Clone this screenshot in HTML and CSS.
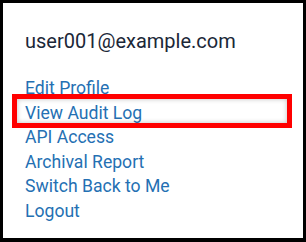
FILE: index.html
```html
<!DOCTYPE html>
<html>
<head>
<meta charset="utf-8">
<link rel="stylesheet" href="styles.css">
</head>
<body>
<div class="frame">
  <div class="email">user001@example.com</div>
  <ul class="menu">
    <li><a href="#">Edit Profile</a></li>
    <li><a href="#">View Audit Log</a></li>
    <li><a href="#">API Access</a></li>
    <li><a href="#">Archival Report</a></li>
    <li><a href="#">Switch Back to Me</a></li>
    <li><a href="#">Logout</a></li>
  </ul>
  <div class="highlight"></div>
</div>
</body>
</html>
```
FILE: styles.css
```css
html, body {
  margin: 0;
  padding: 0;
  background: #000;
}
.frame {
  position: relative;
  box-sizing: border-box;
  width: 306px;
  height: 242px;
  background: #fff;
  border-style: solid;
  border-color: #000;
  border-width: 3px 3px 4px 3px;
  padding: 26px 0 0 22px;
  font-family: Roboto, "Liberation Sans", sans-serif;
}
.email {
  font-size: 20px;
  line-height: 24px;
  color: #1b2738;
}
.menu {
  list-style: none;
  margin: 23px 0 0 0;
  padding: 0;
}
.menu li {
  font-size: 17.6px;
  line-height: 24.5px;
}
.menu a {
  color: #2470b3;
  text-decoration: none;
}
.highlight {
  position: absolute;
  left: 9px;
  top: 91px;
  width: 280px;
  height: 34px;
  box-sizing: border-box;
  border: 5px solid #ff0000;
  box-shadow: inset 0 0 5px rgba(0,0,0,0.25);
}
```
